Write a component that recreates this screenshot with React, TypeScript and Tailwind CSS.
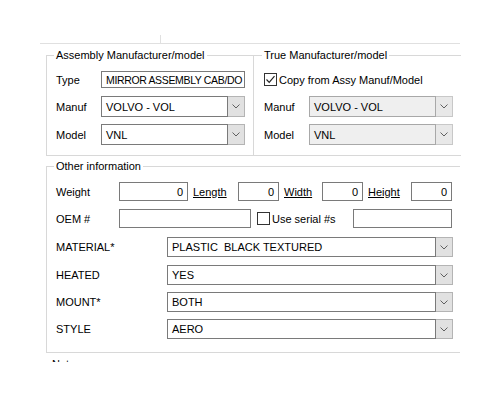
import React from 'react';

const Chevron = () => (
  <svg width="8" height="5" viewBox="0 0 8 5" fill="none">
    <path d="M0.5 0.5 L4 4 L7.5 0.5" stroke="#606060" strokeWidth="1" />
  </svg>
);

function Combo({ value, width, height = 'h-[21px]', disabled = false }: { value: string; width: string; height?: string; disabled?: boolean }) {
  return (
    <div className={`flex ${width} ${height}`}>
      <div
        className={`flex-1 flex items-center pl-[4px] border overflow-hidden whitespace-pre ${
          disabled ? 'bg-[#efefef] border-[#a8a8a8]' : 'bg-white border-[#7a7a7a]'
        }`}
      >
        {value}
      </div>
      <div
        className={`w-[17px] flex items-center justify-center border-y border-r ${
          disabled ? 'bg-[#e8e8e8] border-[#c8c8c8]' : 'bg-[#e1e1e1] border-[#b4b4b4]'
        }`}
      >
        <Chevron />
      </div>
    </div>
  );
}

function TextBox({ value = '', width, right = false, height = 'h-[19px]', extra = '' }: { value?: string; width: string; right?: boolean; height?: string; extra?: string }) {
  return (
    <div
      className={`${width} ${height} border border-[#7a7a7a] bg-white flex items-center overflow-hidden whitespace-nowrap ${
        right ? 'justify-end pr-[4px]' : 'pl-[4px]'
      } ${extra}`}
    >
      {value}
    </div>
  );
}

function CheckBox({ checked }: { checked: boolean }) {
  return (
    <div className="w-[13px] h-[13px] border border-[#333333] bg-white flex items-center justify-center">
      {checked && (
        <svg width="11" height="11" viewBox="0 0 11 11" fill="none">
          <path d="M1.5 5.5 L4.2 8.3 L9.5 2.2" stroke="#222222" strokeWidth="1.2" />
        </svg>
      )}
    </div>
  );
}

const OTHER_COMBOS = [
  { label: 'MATERIAL*', value: 'PLASTIC  BLACK TEXTURED', mt: 'mt-[9px]' },
  { label: 'HEATED', value: 'YES', mt: 'mt-[8px]' },
  { label: 'MOUNT*', value: 'BOTH', mt: 'mt-[7px]' },
  { label: 'STYLE', value: 'AERO', mt: 'mt-[7px]' },
];

export default function App() {
  return (
    <div className="w-[500px] h-[400px] bg-white overflow-hidden text-black text-[11px] leading-[14px] font-['Liberation_Sans',Arial,sans-serif]">
      {/* top divider */}
      <div className="pt-[35px]">
        <div className="ml-[160px] w-px h-[8px] bg-[#e0e0e0]" />
        <div className="ml-[40px] w-[420px] h-px bg-[#e0e0e0]" />
      </div>

      {/* manufacturer groups */}
      <div className="flex mt-[4px] ml-[46px]">
        <fieldset className="w-[208px] h-[108px] border border-[#d8d8d8]">
          <legend className="ml-[7px] px-[2px] leading-[14px]">Assembly Manufacturer/model</legend>
          <div className="pl-[9px]">
            <div className="flex items-center mt-[9px]">
              <span className="w-[45px]">Type</span>
              <TextBox
                value="MIRROR ASSEMBLY CAB/DO"
                width="w-[144px]"
                height="h-[17px]"
                extra="text-[10.5px] tracking-[-0.35px]"
              />
            </div>
            <div className="flex items-center mt-[8px]">
              <span className="w-[45px]">Manuf</span>
              <Combo value="VOLVO - VOL" width="w-[144px]" />
            </div>
            <div className="flex items-center mt-[7px]">
              <span className="w-[45px]">Model</span>
              <Combo value="VNL" width="w-[144px]" />
            </div>
          </div>
        </fieldset>

        <fieldset className="w-[207px] h-[108px] border border-l-0 border-r-0 border-[#d8d8d8]">
          <legend className="ml-[8px] px-[2px] leading-[14px]">True Manufacturer/model</legend>
          <div className="pl-[10px]">
            <div className="flex items-center h-[13px] mt-[11px]">
              <CheckBox checked />
              <span className="ml-[2px]">Copy from Assy Manuf/Model</span>
            </div>
            <div className="flex items-center mt-[10px]">
              <span className="w-[45px]">Manuf</span>
              <Combo value="VOLVO - VOL" width="w-[144px]" disabled />
            </div>
            <div className="flex items-center mt-[7px]">
              <span className="w-[45px]">Model</span>
              <Combo value="VNL" width="w-[144px]" disabled />
            </div>
          </div>
        </fieldset>
      </div>

      {/* other information */}
      <fieldset className="mt-[3px] ml-[46px] w-[414px] h-[194px] border border-r-0 border-[#d8d8d8]">
        <legend className="ml-[7px] px-[2px] leading-[14px]">Other information</legend>
        <div className="pl-[9px]">
          <div className="flex items-center mt-[9px]">
            <span className="w-[63px]">Weight</span>
            <TextBox value="0" width="w-[69px]" right />
            <span className="ml-[5px] w-[45px] underline">Length</span>
            <TextBox value="0" width="w-[41px]" right />
            <span className="ml-[5px] w-[38px] underline">Width</span>
            <TextBox value="0" width="w-[41px]" right />
            <span className="ml-[5px] w-[43px] underline">Height</span>
            <TextBox value="0" width="w-[41px]" right />
          </div>
          <div className="flex items-center mt-[8px]">
            <span className="w-[63px]">OEM #</span>
            <TextBox width="w-[132px]" />
            <div className="ml-[6px]">
              <CheckBox checked={false} />
            </div>
            <span className="ml-[2px] w-[81px]">Use serial #s</span>
            <TextBox width="w-[99px]" />
          </div>
          {OTHER_COMBOS.map((c) => (
            <div key={c.label} className={`flex items-center ${c.mt}`}>
              <span className="w-[111px]">{c.label}</span>
              <Combo value={c.value} width="w-[286px]" height="h-[20px]" />
            </div>
          ))}
        </div>
      </fieldset>

      {/* notes label, mostly cut off as in the source */}
      <div className="ml-[52px] mt-[6px] h-[3px] overflow-hidden">
        <div className="-mt-[2px]">Notes</div>
      </div>
    </div>
  );
}
